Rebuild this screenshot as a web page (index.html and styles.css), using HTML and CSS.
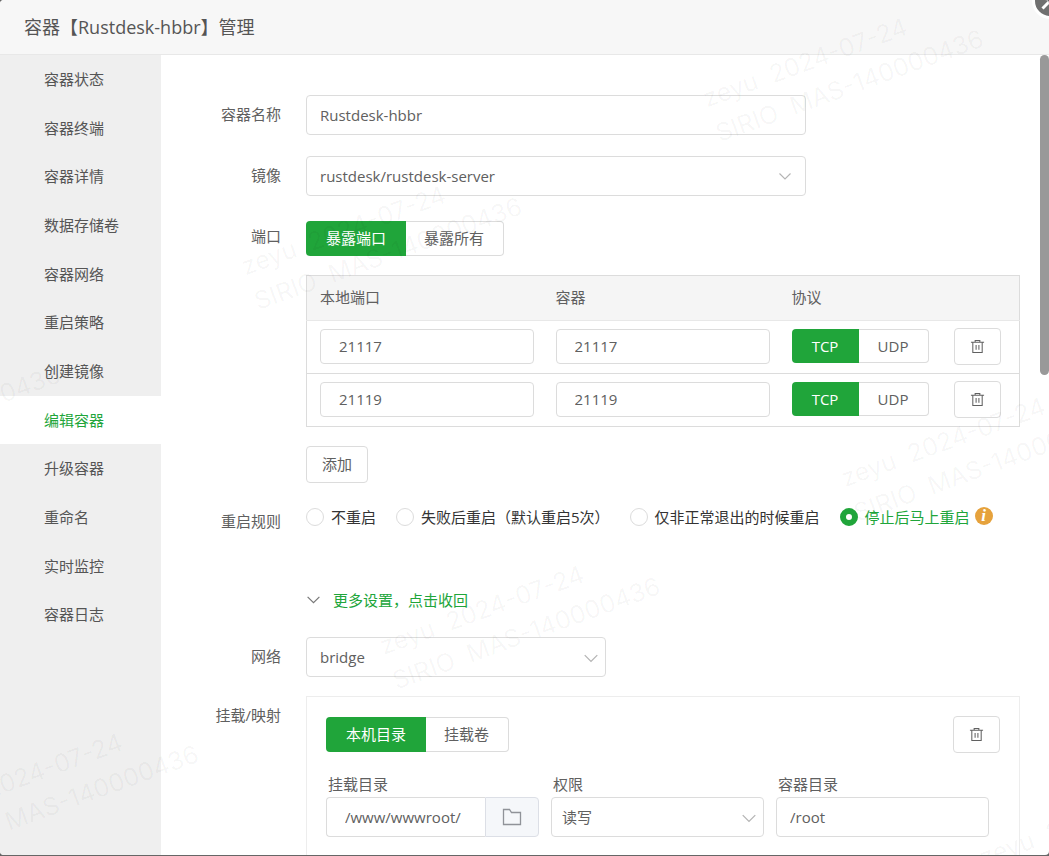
FILE: index.html
```
<!DOCTYPE html>
<html lang="zh-CN">
<head>
    <meta charset="UTF-8">
    <meta name="viewport" content="width=device-width, initial-scale=1.0">
    <title>容器管理</title>
    <link rel="stylesheet" href="styles.css">
</head>
<body>
    <svg class="sprite" aria-hidden="true">
        <symbol id="icon-trash" viewBox="0 0 16 16">
            <path d="M1 3.5h14M5.5 3.5v-2h5v2M3 3.5v11h10v-11M6.5 6.5v5M9.5 6.5v5" fill="none" stroke="currentColor" stroke-width="1.1"/>
        </symbol>
        <symbol id="icon-arrow" viewBox="0 0 14 14">
            <path d="M1.5 4.5L7 10l5.5-5.5" fill="none" stroke="currentColor" stroke-width="1.1"/>
        </symbol>
    </svg>

    <div class="modal">
        <header class="modal-header">
            <h1>容器【Rustdesk-hbbr】管理</h1>
        </header>
        <button type="button" class="close-btn" aria-label="关闭">
            <svg viewBox="0 0 30 30"><path d="M7.500 7.500l15 15M22.500 7.500l-15 15" stroke="#fff" stroke-width="3"/></svg>
        </button>

        <div class="modal-body">
            <nav class="sidebar">
                <ul>
                    <li><a href="#">容器状态</a></li>
                    <li><a href="#">容器终端</a></li>
                    <li><a href="#">容器详情</a></li>
                    <li><a href="#">数据存储卷</a></li>
                    <li><a href="#">容器网络</a></li>
                    <li><a href="#">重启策略</a></li>
                    <li><a href="#">创建镜像</a></li>
                    <li class="active"><a href="#">编辑容器</a></li>
                    <li><a href="#">升级容器</a></li>
                    <li><a href="#">重命名</a></li>
                    <li><a href="#">实时监控</a></li>
                    <li><a href="#">容器日志</a></li>
                </ul>
            </nav>

            <form class="content">
                <div class="form-row">
                    <label class="form-label" for="containerName">容器名称</label>
                    <div class="form-field">
                        <input type="text" class="input name-field" id="containerName" value="Rustdesk-hbbr">
                    </div>
                </div>

                <div class="form-row">
                    <label class="form-label" for="image">镜像</label>
                    <div class="form-field">
                        <div class="select name-field">
                            <select id="image"><option>rustdesk/rustdesk-server</option></select>
                            <svg class="arrow"><use href="#icon-arrow"/></svg>
                        </div>
                    </div>
                </div>

                <div class="form-row">
                    <span class="form-label">端口</span>
                    <div class="form-field port-field">
                        <div class="btn-group">
                            <button type="button" class="on">暴露端口</button>
                            <button type="button">暴露所有</button>
                        </div>
                        <table class="port-table">
                            <thead>
                                <tr>
                                    <th class="col-port">本地端口</th>
                                    <th class="col-port">容器</th>
                                    <th class="col-protocol">协议</th>
                                    <th></th>
                                </tr>
                            </thead>
                            <tbody>
                                <tr>
                                    <td><input type="text" class="input" aria-label="本地端口" value="21117"></td>
                                    <td><input type="text" class="input" aria-label="容器端口" value="21117"></td>
                                    <td>
                                        <div class="btn-group protocol">
                                            <button type="button" class="on">TCP</button>
                                            <button type="button">UDP</button>
                                        </div>
                                    </td>
                                    <td><button type="button" class="btn icon-btn" aria-label="删除"><svg><use href="#icon-trash"/></svg></button></td>
                                </tr>
                                <tr>
                                    <td><input type="text" class="input" aria-label="本地端口" value="21119"></td>
                                    <td><input type="text" class="input" aria-label="容器端口" value="21119"></td>
                                    <td>
                                        <div class="btn-group protocol">
                                            <button type="button" class="on">TCP</button>
                                            <button type="button">UDP</button>
                                        </div>
                                    </td>
                                    <td><button type="button" class="btn icon-btn" aria-label="删除"><svg><use href="#icon-trash"/></svg></button></td>
                                </tr>
                            </tbody>
                        </table>
                        <button type="button" class="btn">添加</button>
                    </div>
                </div>

                <div class="form-row restart-row">
                    <span class="form-label">重启规则</span>
                    <div class="form-field radio-group">
                        <label><input type="radio" name="restart"><span>不重启</span></label>
                        <label><input type="radio" name="restart"><span>失败后重启（默认重启5次）</span></label>
                        <label><input type="radio" name="restart"><span>仅非正常退出的时候重启</span></label>
                        <label><input type="radio" name="restart" checked><span>停止后马上重启</span></label>
                        <span class="info">i</span>
                    </div>
                </div>

                <div class="form-row more-row">
                    <a href="#" class="more">
                        <svg><use href="#icon-arrow"/></svg>
                        <span>更多设置，点击收回</span>
                    </a>
                </div>

                <div class="form-row network-row">
                    <label class="form-label" for="network">网络</label>
                    <div class="form-field">
                        <div class="select network-field">
                            <select id="network"><option>bridge</option></select>
                            <svg class="arrow"><use href="#icon-arrow"/></svg>
                        </div>
                    </div>
                </div>

                <div class="form-row">
                    <span class="form-label">挂载/映射</span>
                    <div class="form-field mount-box">
                        <div class="mount-head">
                            <div class="btn-group">
                                <button type="button" class="on">本机目录</button>
                                <button type="button">挂载卷</button>
                            </div>
                            <button type="button" class="btn icon-btn" aria-label="删除"><svg><use href="#icon-trash"/></svg></button>
                        </div>
                        <div class="mount-fields">
                            <div>
                                <label for="mountDir">挂载目录</label>
                                <div class="input-group">
                                    <input type="text" class="input" id="mountDir" value="/www/wwwroot/">
                                    <button type="button" aria-label="选择目录">
                                        <svg viewBox="0 0 20 18"><path d="M1.500 1.500h6l2 3h9v12h-17z" fill="none" stroke="#909399" stroke-width="1.300"/></svg>
                                    </button>
                                </div>
                            </div>
                            <div>
                                <label for="mode">权限</label>
                                <div class="select mode-field">
                                    <select id="mode"><option>读写</option></select>
                                    <svg class="arrow"><use href="#icon-arrow"/></svg>
                                </div>
                            </div>
                            <div>
                                <label for="containerDir">容器目录</label>
                                <input type="text" class="input" id="containerDir" value="/root">
                            </div>
                        </div>
                    </div>
                </div>
            </form>
            <div class="scrollbar"><div class="thumb"></div></div>
        </div>

        <!-- 水印 -->
        <div class="watermark" aria-hidden="true">
            <div class="watermark-grid">
                <p>zeyu  2024-07-24<br>SIRIO  MAS-140000436</p>
                <p>zeyu  2024-07-24<br>SIRIO  MAS-140000436</p>
                <p>zeyu  2024-07-24<br>SIRIO  MAS-140000436</p>
                <p>zeyu  2024-07-24<br>SIRIO  MAS-140000436</p>
                <p>zeyu  2024-07-24<br>SIRIO  MAS-140000436</p>
                <p>zeyu  2024-07-24<br>SIRIO  MAS-140000436</p>
                <p class="last">zeyu  2024-07-24</p>
            </div>
        </div>
    </div>
</body>
</html>
```
FILE: styles.css
```
* {
    box-sizing: border-box;
}
body {
    margin: 0;
    background: #666;
    color: #606060;
    font: 15px/20px "Open Sans", "Noto Sans CJK SC", sans-serif;
    overflow: hidden;
}
input, select, button {
    font: inherit;
    color: inherit;
}
button {
    padding: 0;
    cursor: pointer;
}
a {
    color: inherit;
    text-decoration: none;
}
.sprite {
    display: none;
}
.modal {
    position: relative;
    display: flex;
    flex-direction: column;
    height: calc(100vh - 1px);
    background: #fff;
    border-radius: 4px;
    overflow: hidden;
}
.modal-header {
    flex: none;
    padding: 0 24px;
    background: #f7f7f7;
    border-bottom: 1px solid #e8e8e8;
}
.modal-header h1 {
    margin: 0;
    color: #555;
    font-size: 18px;
    font-weight: normal;
    line-height: 54px;
}
.close-btn {
    position: absolute;
    top: -17px;
    right: -19px;
    width: 36px;
    height: 36px;
    border: 3px solid #fff;
    border-radius: 50%;
    background: #707070;
}
.close-btn svg {
    display: block;
}
.modal-body {
    display: flex;
    flex: 1;
    min-height: 0;
}

/* 左侧菜单 */
.sidebar {
    flex: none;
    width: 161px;
    background: #efefef;
    color: #555;
}
.sidebar ul {
    display: flex;
    flex-direction: column;
    height: 584px;
    margin: 0;
    padding: 0;
    list-style: none;
}
.sidebar li {
    display: flex;
    flex: 1;
    align-items: center;
    padding: 0 0 1px 44px;
}
.sidebar .active {
    background: #fff;
    color: #20a53a;
}

/* 表单 */
.content {
    flex: 1;
    min-width: 0;
    padding: 40px 20px 0 0;
    overflow: hidden;
}
.form-row {
    display: flex;
    gap: 25px;
    margin-bottom: 21px;
}
.form-label {
    flex: none;
    width: 120px;
    line-height: 38px;
    text-align: right;
}
.form-field {
    flex: 1;
    min-width: 0;
}
.input, .select select {
    display: block;
    width: 100%;
    height: 40px;
    padding: 0 13px;
    border: 1px solid #dcdcdc;
    border-radius: 4px;
    background: #fff;
    outline: none;
}
.name-field {
    width: 500px;
    max-width: 100%;
}
.network-field {
    width: 300px;
}
.select {
    position: relative;
}
.select select {
    appearance: none;
}
.arrow {
    position: absolute;
    top: 13px;
    right: 14px;
    width: 14px;
    height: 14px;
    color: #b4b4b4;
    pointer-events: none;
}
.network-field .arrow, .mode-field .arrow {
    right: 7px;
    width: 16px;
    height: 16px;
}
.btn {
    height: 37px;
    padding: 0 15px 2px;
    border: 1px solid #dcdcdc;
    border-radius: 4px;
    background: #fff;
}
.icon-btn {
    display: flex;
    align-items: center;
    justify-content: center;
    width: 47px;
    padding: 0;
}
.icon-btn svg {
    width: 15px;
    height: 15px;
}
.btn-group {
    display: flex;
}
.btn-group button {
    height: 35px;
    padding: 0 19px 2px 18px;
    border: 1px solid #dcdcdc;
    border-left: none;
    border-radius: 0 4px 4px 0;
    background: #fff;
}
.btn-group .on {
    padding: 0 20px 2px;
    border: none;
    border-radius: 4px 0 0 4px;
    background: #20a53a;
    color: #fff;
}
.port-field {
    padding-top: 4px;
}
.port-table {
    width: 100%;
    margin: 19px 0;
    border-collapse: collapse;
    border: 1px solid #dcdcdc;
    table-layout: fixed;
}
.port-table th {
    height: 45px;
    padding: 0 13px 2px;
    border-bottom: 1px solid #e8e8e8;
    background: #f5f5f5;
    font-weight: normal;
    text-align: left;
}
.port-table td {
    height: 53px;
    padding: 0 0 2px 13px;
    border-bottom: 1px solid #dcdcdc;
}
.col-port {
    width: 236px;
}
.col-protocol {
    width: 162px;
}
.port-table .input {
    width: 214px;
    height: 35px;
    padding: 0 18px;
}
.port-table .protocol button {
    width: 70px;
    height: 34px;
    padding: 0;
}
.port-table .protocol .on {
    width: 67px;
}
.restart-row .form-label {
    line-height: 34px;
}
.radio-group {
    display: flex;
    height: 26px;
    align-items: center;
    color: #333;
    white-space: nowrap;
}
.radio-group label {
    display: flex;
    align-items: center;
    gap: 7px;
    margin-right: 20px;
}
.radio-group input {
    appearance: none;
    width: 18px;
    height: 18px;
    margin: 0;
    border: 1px solid #dcdcdc;
    border-radius: 50%;
    background: #fff;
}
.radio-group input:checked {
    border: 6px solid #20a53a;
}
.radio-group input:checked + span {
    color: #20a53a;
}
.radio-group label:last-of-type {
    margin-right: 5px;
}
.info {
    width: 18px;
    height: 18px;
    margin-bottom: 3px;
    border-radius: 50%;
    background: #e6a23c;
    color: #fff;
    font: italic bold 17px/18px "Liberation Serif", serif;
    text-align: center;
}
.more-row {
    padding: 24px 0 0 145px;
}
.more {
    display: flex;
    align-items: center;
    gap: 12px;
    height: 33px;
    color: #20a53a;
}
.more svg {
    width: 15px;
    height: 15px;
    color: #777;
}
.network-row {
    margin-bottom: 19px;
}
.mount-box {
    min-height: 240px;
    padding: 19px;
    border: 1px solid #ededed;
}
.mount-head {
    display: flex;
    align-items: center;
    justify-content: space-between;
}
.mount-fields {
    display: grid;
    grid-template-columns: repeat(3, 1fr);
    gap: 12px;
    margin: 21px 11px 0 0;
}
.mount-fields label {
    display: block;
    padding: 0 2px 3px;
}
.input-group {
    display: flex;
}
.input-group .input {
    flex: 1;
    min-width: 0;
    padding: 0 0 0 18px;
    border-right: none;
    border-radius: 4px 0 0 4px;
}
.input-group button {
    display: flex;
    align-items: center;
    justify-content: center;
    width: 54px;
    border: 1px solid #dcdfe6;
    border-radius: 0 4px 4px 0;
    background: #f5f7fa;
}
.input-group svg {
    width: 20px;
    height: 18px;
}
.mode-field select {
    padding: 0 10px;
}

/* 滚动条 */
.scrollbar {
    flex: none;
    width: 9px;
}
.thumb {
    height: 40%;
    border-radius: 5px;
    background: #999;
}

.watermark {
    position: absolute;
    inset: 0;
    overflow: hidden;
    pointer-events: none;
}
.watermark-grid {
    position: absolute;
    top: 418px;
    left: -225px;
    display: grid;
    grid-template-columns: repeat(3, 491px);
    grid-auto-rows: 404px;
    transform: rotate(-20deg);
    transform-origin: 0 0;
    color: rgba(0, 0, 0, 0.04);
    font: 25px/37px Inter, sans-serif;
    white-space: pre;
}
.watermark-grid p {
    margin: 0;
}
.watermark-grid .last {
    grid-column: 3;
}
```
